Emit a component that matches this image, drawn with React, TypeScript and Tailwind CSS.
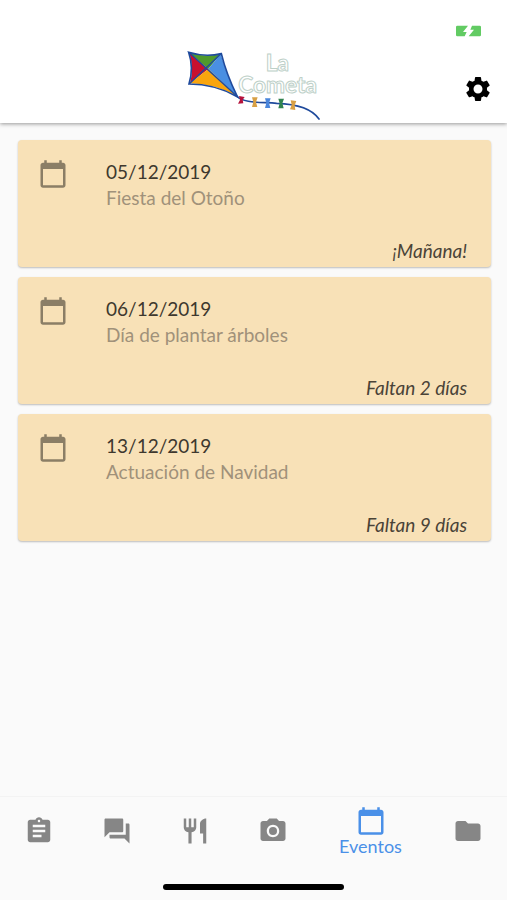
import React, { useState } from "react";
import {
  MdAssignment,
  MdCalendarToday,
  MdCameraAlt,
  MdFolder,
  MdForum,
  MdRestaurant,
  MdSettings,
} from "react-icons/md";

interface SchoolEvent {
  date: string;
  title: string;
  remaining: string;
}

const events: SchoolEvent[] = [
  { date: "05/12/2019", title: "Fiesta del Otoño", remaining: "¡Mañana!" },
  { date: "06/12/2019", title: "Día de plantar árboles", remaining: "Faltan 2 días" },
  { date: "13/12/2019", title: "Actuación de Navidad", remaining: "Faltan 9 días" },
];

const tabs = [
  { id: "tareas", label: "Tareas", icon: MdAssignment },
  { id: "mensajes", label: "Mensajes", icon: MdForum },
  { id: "menu", label: "Menú", icon: MdRestaurant },
  { id: "fotos", label: "Fotos", icon: MdCameraAlt },
  { id: "eventos", label: "Eventos", icon: MdCalendarToday },
  { id: "archivos", label: "Archivos", icon: MdFolder },
];

function Battery() {
  return (
    <svg viewBox="0 0 75 36" className="w-[25px] h-3" aria-hidden="true">
      <path d="M4 2h32L21 21h11l-6 13H4a4 4 0 0 1-4-4V6a4 4 0 0 1 4-4z" fill="#62cb63" />
      <path d="M48 2h23a4 4 0 0 1 4 4v24a4 4 0 0 1-4 4H38l16-20H43z" fill="#62cb63" />
    </svg>
  );
}

function Logo() {
  return (
    <svg viewBox="0 0 450 270" className="w-[150px] h-[90px]" role="img" aria-label="La Cometa">
      <path d="M28 38Q75 52 122 42L85 87z" fill="#4f9a2c" />
      <path d="M28 38L85 87L30 130Q42 84 28 38z" fill="#c8102e" />
      <path d="M122 42Q138 100 170 168L85 87z" fill="#4a8fe2" />
      <path d="M30 130L85 87L170 168Q105 132 30 130z" fill="#f9a50e" />
      <g fill="none" stroke="#1f4a9c" strokeLinecap="round" strokeWidth="5">
        <path d="M26 37Q75 52 124 41Q138 100 172 170Q105 132 27 132Q42 84 26 37z" />
        <path d="M28 38L170 168M122 42L30 130" strokeWidth="4" />
        <path d="M170 168C190 190 240 186 290 190C350 192 395 205 417 237" />
      </g>
      <path d="M177 168l17 3-6 8 2 11-16 1 6-11z" fill="#b5123b" />
      <path d="M216 172h17l-5 14 4 15h-16l4-15z" fill="#d8a045" />
      <path d="M255 175h17l-5 14 4 15h-16l4-15z" fill="#4a86dc" />
      <path d="M295 176h17l-5 14 4 15h-16l4-15z" fill="#31834f" />
      <path d="M332 181l17 2-5 13 2 14-16-2 5-13z" fill="#d8a045" />
      <text
        fill="#ffffff"
        stroke="#bdd0c8"
        strokeWidth="3"
        fontFamily="Lato, sans-serif"
        fontWeight="700"
        fontSize="68"
        textAnchor="middle"
      >
        <tspan x="292" y="94">La</tspan>
        <tspan x="293" y="158">Cometa</tspan>
      </text>
    </svg>
  );
}

function EventCard({ event }: { event: SchoolEvent }) {
  return (
    <li className="flex flex-col justify-between rounded bg-[#f8e1b7] pt-4 pr-6 pb-1 pl-5 h-[127px] shadow-[0_1px_2px_rgba(0,0,0,0.25)]">
      <div className="flex">
        <MdCalendarToday className="size-[30px] mt-[3px] mr-[38px] shrink-0 text-[#8b7e66]" />
        <div>
          <h2 className="text-[19px] leading-8 text-[#3e382e]">{event.date}</h2>
          <p className="text-[19px] leading-5 text-[#a0917a]">{event.title}</p>
        </div>
      </div>
      <p className="text-right text-[19px] leading-6 italic text-[#4a4337]">{event.remaining}</p>
    </li>
  );
}

export default function App() {
  const [active, setActive] = useState("eventos");

  return (
    <div className="flex min-h-screen flex-col bg-[#fafafa] font-[Lato,sans-serif]">
      <header className="bg-white pt-[25px] shadow-[0_1px_4px_rgba(0,0,0,0.4)]">
        <div className="flex h-3 justify-end pr-[26px]">
          <Battery />
        </div>
        <div className="grid grid-cols-[1fr_auto_1fr] items-center pt-[3px] pr-[14px] pl-4">
          <span />
          <div className="-mb-[7px]">
            <Logo />
          </div>
          <button type="button" aria-label="Ajustes" className="mt-[14px] justify-self-end">
            <MdSettings className="size-[30px] text-black" />
          </button>
        </div>
      </header>

      <main className="flex-1 pt-[17px] pr-4 pb-4 pl-[18px]">
        <ul className="flex flex-col gap-[10px]">
          {events.map((event) => (
            <EventCard key={event.date} event={event} />
          ))}
        </ul>
      </main>

      <footer className="border-t border-[#f3f3f3]">
        <nav className="flex h-[68px] items-center">
          {tabs.map(({ id, label, icon: Icon }) => {
            const isActive = id === active;
            return (
              <button
                key={id}
                type="button"
                aria-label={label}
                onClick={() => setActive(id)}
                className={
                  isActive
                    ? "flex flex-[1.5] flex-col items-center text-[#4a90e8]"
                    : "flex flex-1 flex-col items-center text-[#868686]"
                }
              >
                <Icon className="size-[30px]" />
                {isActive && <span className="text-lg leading-5">{label}</span>}
              </button>
            );
          })}
        </nav>
        <div className="flex justify-center pt-[19px] pb-[10px]">
          <div className="h-[6px] w-[181px] rounded-full bg-black" />
        </div>
      </footer>
    </div>
  );
}
